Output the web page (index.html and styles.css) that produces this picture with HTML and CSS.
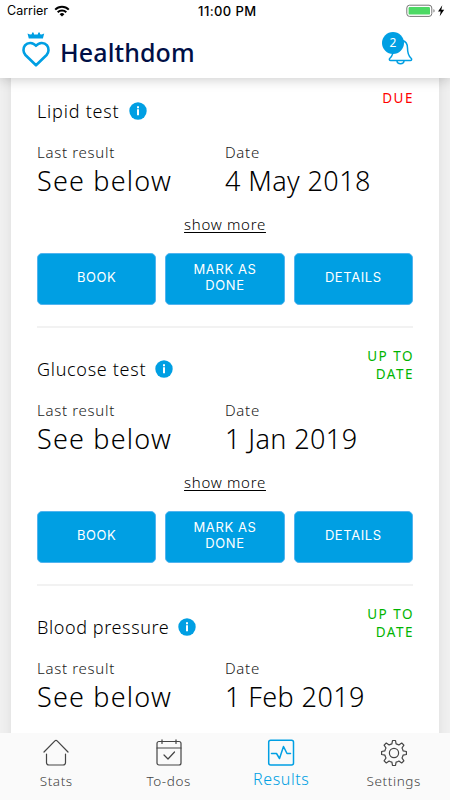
FILE: index.html
```html
<!DOCTYPE html>
<html lang="en">
<head>
    <meta charset="UTF-8">
    <meta name="viewport" content="width=device-width, initial-scale=1.0">
    <title>Healthdom - Results</title>
    <link rel="stylesheet" href="styles.css">
</head>
<body>
    <div class="app">
        <div class="top">
            <div class="status-bar">
                <div class="carrier">
                    <span>Carrier</span>
                    <svg width="16" height="12" viewBox="0 0 16 12" fill="none" stroke="#000" stroke-width="2">
                        <path d="M1.2 4.6a9.6 9.6 0 0 1 13.6 0M3.7 7.3a6.1 6.1 0 0 1 8.6 0"/>
                        <path d="M8 11.6L5.6 9.2a3.4 3.4 0 0 1 4.8 0z" fill="#000" stroke="none"/>
                    </svg>
                </div>
                <span class="clock">11:00 PM</span>
                <svg class="battery" width="39" height="14" viewBox="0 0 39 14">
                    <rect x=".8" y="1.2" width="25" height="11.2" rx="2.8" fill="#fff" stroke="#777"/>
                    <rect x="2.6" y="3" width="21.4" height="7.6" rx="1.2" fill="#4cd964"/>
                    <path d="M27.4 5v3.6q1.3-.4 1.3-1.8T27.4 5z" fill="#888"/>
                    <path d="M36.3 1.2L32 7.4h2.7l-1 4.8 4.500-6.500h-2.900z" fill="#000"/>
                </svg>
            </div>
            <div class="header">
                <svg class="logo" width="30" height="36" viewBox="0 0 30 36">
                    <path d="M6.500 1.500l2.500 1 1.800-.2.300-1.700h1.400l.6 1.900h3.600l.7-1.900h1.400l.3 1.700 1.600.1 2.500-1-1.300 5H7.800z" fill="#009fe3"/>
                    <path d="M15 33.300L4.400 23C2 20.500 1.800 16.200 4 13.400c2.700-3.400 8-3.300 11 .4 3-3.700 8.300-3.800 11-.4 2.200 2.800 2 7.100-.4 9.600z" fill="none" stroke="#009fe3" stroke-width="2.600" stroke-linejoin="round"/>
                </svg>
                <h1>Healthdom</h1>
                <div class="bell">
                    <svg width="25" height="28" viewBox="0 0 25 28" fill="none" stroke="#009fe3" stroke-width="1.500" stroke-linecap="round" stroke-linejoin="round">
                        <path d="M10.500 3.500a2.200 2.200 0 0 1 4 0c3.600 1 5 3.800 5 7.500 0 5.500 1 8 3.600 10.200 1 1 .6 2.300-.8 2.300H2.700c-1.400 0-1.800-1.300-.8-2.300C4.500 19 5.500 16.500 5.500 11c0-3.700 1.400-6.500 5-7.500z"/>
                        <path d="M9 24c.2 3.500 6.800 3.500 7 0"/>
                    </svg>
                    <span class="badge">2</span>
                </div>
            </div>
        </div>

        <div class="content">
            <div class="card">
                <div class="test">
                    <div class="test-head">
                        <h2 class="lipid">Lipid test</h2>
                        <svg class="info" width="18" height="18" viewBox="0 0 18 18"><circle cx="9" cy="9" r="8.700" fill="#009fe3"/><path d="M8 4.300h2v2H8zM8 7.300h2v6H8z" fill="#fff"/></svg>
                        <span class="state due">DUE</span>
                    </div>
                    <div class="values">
                        <div class="last">
                            <p class="label">Last result</p>
                            <p class="value">See below</p>
                        </div>
                        <div class="date">
                            <p class="label">Date</p>
                            <p class="value">4 May 2018</p>
                        </div>
                    </div>
                    <a class="more">show more</a>
                    <div class="buttons">
                        <button>BOOK</button>
                        <button>MARK AS<br>DONE</button>
                        <button>DETAILS</button>
                    </div>
                </div>

                <div class="test">
                    <div class="test-head">
                        <h2 class="glucose">Glucose test</h2>
                        <svg class="info" width="18" height="18" viewBox="0 0 18 18"><circle cx="9" cy="9" r="8.700" fill="#009fe3"/><path d="M8 4.300h2v2H8zM8 7.300h2v6H8z" fill="#fff"/></svg>
                        <span class="state ok">UP TO<br>DATE</span>
                    </div>
                    <div class="values">
                        <div class="last">
                            <p class="label">Last result</p>
                            <p class="value">See below</p>
                        </div>
                        <div class="date">
                            <p class="label">Date</p>
                            <p class="value">1 Jan 2019</p>
                        </div>
                    </div>
                    <a class="more">show more</a>
                    <div class="buttons">
                        <button>BOOK</button>
                        <button>MARK AS<br>DONE</button>
                        <button>DETAILS</button>
                    </div>
                </div>

                <div class="test">
                    <div class="test-head">
                        <h2 class="pressure">Blood pressure</h2>
                        <svg class="info" width="18" height="18" viewBox="0 0 18 18"><circle cx="9" cy="9" r="8.700" fill="#009fe3"/><path d="M8 4.300h2v2H8zM8 7.300h2v6H8z" fill="#fff"/></svg>
                        <span class="state ok">UP TO<br>DATE</span>
                    </div>
                    <div class="values">
                        <div class="last">
                            <p class="label">Last result</p>
                            <p class="value">See below</p>
                        </div>
                        <div class="date">
                            <p class="label">Date</p>
                            <p class="value">1 Feb 2019</p>
                        </div>
                    </div>
                </div>
            </div>
        </div>

        <div class="tabs">
            <div class="tab">
                <svg width="28" height="28" viewBox="0 0 28 28">
                    <path d="M2 13L12.900 1.900q1.100-1 2.200 0L26 13M4.500 15v8.500q0 2.500 2.500 2.500h14q2.500 0 2.500-2.500V15"/>
                </svg>
                <span>Stats</span>
            </div>
            <div class="tab">
                <svg width="28" height="28" viewBox="0 0 28 28">
                    <rect x="2" y="2.500" width="24" height="23.500" rx="2"/>
                    <path d="M2 9h24M7 .8V4.500M21 .8V4.500M9 16l4 4 6.500-7"/>
                </svg>
                <span>To-dos</span>
            </div>
            <div class="tab active">
                <svg width="28" height="28" viewBox="0 0 28 28">
                    <rect x="1.700" y="1.200" width="24.800" height="24.800" rx="2"/>
                    <path d="M4.500 14.500h5l3 5 4-12 3.500 7h3.500"/>
                </svg>
                <span>Results</span>
            </div>
            <div class="tab">
                <svg width="28" height="28" viewBox="0 0 28 28">
                    <circle cx="14" cy="14" r="4.600"/>
                    <path d="M12.500 1.500h3l.6 3.300q1.500.3 2.800 1.100l2.800-1.900 2.200 2.200-1.900 2.800q.8 1.300 1.100 2.800l3.300.7v3l-3.300.7q-.3 1.500-1.100 2.800l1.900 2.800-2.200 2.200-2.800-1.900q-1.300.8-2.800 1.100l-.6 3.300h-3l-.6-3.300q-1.500-.3-2.800-1.100L6.300 24l-2.200-2.200L6 19q-.8-1.300-1.100-2.800l-3.300-.7v-3l3.300-.7Q5.200 10.300 6 9L4.100 6.200 6.300 4l2.800 1.900q1.300-.8 2.800-1.100z"/>
                </svg>
                <span>Settings</span>
            </div>
        </div>
    </div>
</body>
</html>
```
FILE: styles.css
```css
* {
    margin: 0;
    padding: 0;
    box-sizing: border-box;
}

body {
    font-family: "Noto Sans", "Open Sans", sans-serif;
    font-weight: 300;
    color: #000;
}

.app {
    height: 800px;
    display: flex;
    flex-direction: column;
    overflow: hidden;
    background: #f0f0f0;
}

.top {
    position: relative;
    z-index: 1;
    flex: none;
    height: 78px;
    background: #fff;
    box-shadow: 0 1px 12px rgba(0,0,0,0.22);
}

.status-bar {
    display: flex;
    align-items: center;
    height: 22px;
    padding: 0 5px 0 7px;
    font: 12.5px/22px Inter, sans-serif;
}

.carrier {
    display: flex;
    align-items: center;
    flex: 1;
    gap: 6px;
}

.clock {
    font-weight: 500;
    font-size: 13px;
    letter-spacing: 0.4px;
}

.battery {
    margin-left: 149.5px;
}

.header {
    display: flex;
    padding: 10px 37px 0 21px;
}

.header h1 {
    flex: 1;
    margin-left: 9px;
    font: 500 25px/40px "Noto Sans", sans-serif;
    letter-spacing: 0.1px;
    color: #000f46;
}

.bell {
    position: relative;
    padding-top: 5px;
}

.bell svg {
    display: block;
}

.badge {
    position: absolute;
    left: -6px;
    top: 0;
    width: 22px;
    height: 22px;
    border-radius: 50%;
    background: #009fe3;
    color: #fff;
    font-size: 12px;
    font-weight: 400;
    line-height: 21px;
    text-align: center;
}

.content {
    flex: 1;
    min-height: 0;
    overflow: hidden;
    padding: 0 11px;
}

.card {
    height: 700px;
    margin-top: -10.3px;
    padding: 0 26px;
    background: #fff;
    box-shadow: 0 0 12px rgba(0,0,0,0.08);
}

.test {
    height: 258.3px;
    padding-top: 19px;
    border-top: 2px solid #f2f2f2;
}

.test-head {
    display: flex;
    height: 51px;
}

.test-head h2 {
    padding-top: 10px;
    font-size: 18px;
    font-weight: 300;
    line-height: 24px;
    letter-spacing: 0.6px;
}

.test-head .lipid {
    letter-spacing: 0.8px;
}

.test-head .glucose {
    letter-spacing: 0.7px;
}

.info {
    margin: 13px 0 0 9px;
}

.state {
    margin: 1px -1px 0 auto;
    font-size: 13.5px;
    font-weight: 400;
    line-height: 17.5px;
    letter-spacing: 1.5px;
    text-align: right;
}

.due {
    color: #f00;
}

.ok {
    color: #00b400;
}

.values {
    display: flex;
}

.last {
    width: 188px;
}

.label {
    font-size: 15px;
    line-height: 24px;
    letter-spacing: 0.7px;
    color: #222;
}

.value {
    font-size: 27px;
    line-height: 34px;
    letter-spacing: 0.4px;
}

.last .value {
    letter-spacing: 1.2px;
}

.more {
    display: block;
    margin: 14px 0 17px;
    font-size: 15px;
    line-height: 24px;
    letter-spacing: 0.7px;
    text-align: center;
    text-decoration: underline;
    text-underline-offset: 2px;
}

.buttons {
    display: flex;
    gap: 9px;
}

.buttons button {
    flex: 1;
    height: 52px;
    padding-bottom: 4px;
    border: 1px solid #52b4ef;
    border-radius: 5px;
    background: #009fe3;
    color: #fff;
    font: 400 13px/16px Inter, sans-serif;
    letter-spacing: 0.6px;
}

.tabs {
    display: flex;
    flex: none;
    height: 67px;
    background: #fafafa;
}

.tab {
    flex: 1;
    display: flex;
    flex-direction: column;
    align-items: center;
    padding-top: 6px;
    font-size: 13.5px;
    color: #444;
}

.tab svg {
    fill: none;
    stroke: #444;
    stroke-width: 1.2;
    stroke-linecap: round;
    stroke-linejoin: round;
}

.tab span {
    margin-top: 4px;
    line-height: 20px;
    letter-spacing: 0.6px;
}

.active {
    font-size: 16px;
    color: #009fe3;
}

.active svg {
    stroke: #009fe3;
    stroke-width: 1.5;
}

.active span {
    margin-top: 2px;
}
```
